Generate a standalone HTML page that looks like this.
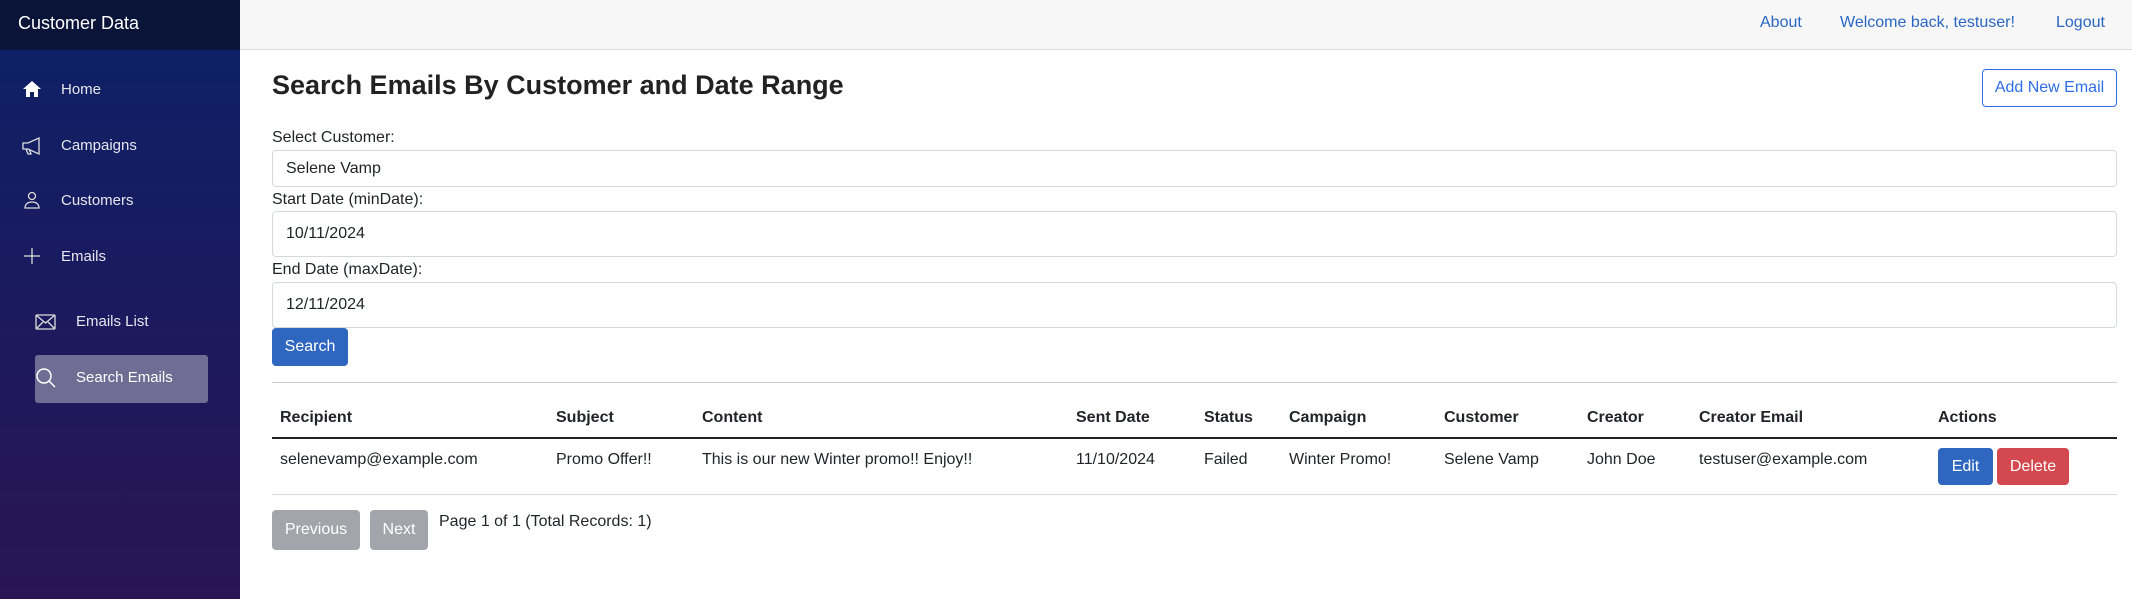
<!DOCTYPE html>
<html><head><meta charset="utf-8"><style>
*{box-sizing:border-box;margin:0;padding:0}
body{width:2132px;height:599px;overflow:hidden;font-family:"Liberation Sans",Arial,sans-serif;background:#fff;color:#212529;position:relative}
.a{position:absolute;white-space:nowrap}
#side{position:absolute;left:0;top:0;width:240px;height:599px;background:linear-gradient(180deg,#0f2066 50px,#1b1a5e 300px,#2a1555 599px)}
#sh{position:absolute;left:0;top:0;width:240px;height:50px;background:#0a1438;color:#fff;font-size:18px;line-height:46px;padding-left:18px}
.nav{color:#e6e6ee;font-size:15px}
#top{position:absolute;left:240px;top:0;right:0;height:50px;background:#f7f7f7;border-bottom:1px solid #dcdcdc}
.lnk{color:#2a66c4;font-size:16px}
.inp{position:absolute;left:272px;width:1845px;border:1px solid #d5d8dc;border-radius:4px;font-size:16px;padding-left:13px}
.lbl{font-size:16px}
.th{font-weight:bold;font-size:16px;top:409px}
.td{font-size:16px;top:451px}
.btn{position:absolute;color:#fff;font-size:16px;border-radius:4px;text-align:center}
</style></head><body>
<div id="side">
<div id="sh">Customer Data</div>
<svg class="a" style="left:22px;top:80px" width="20" height="18" viewBox="0 0 20 18"><path d="M10 1L1 9h3v8h4v-5h4v5h4V9h3z" fill="#fff"/></svg>
<div class="a nav" style="left:61px;top:81px">Home</div>
<svg class="a" style="left:21px;top:136px" width="22" height="20" viewBox="0 0 22 20" fill="none" stroke="#ddd" stroke-width="1.3"><path d="M2 7h5l11-5v16L7 13H2z M5 13l2 5h3l-2-5 M18 2v16"/></svg>
<div class="a nav" style="left:61px;top:137px">Campaigns</div>
<svg class="a" style="left:23px;top:191px" width="18" height="18" viewBox="0 0 18 18" fill="none" stroke="#ddd" stroke-width="1.3"><circle cx="9" cy="5" r="3.5"/><path d="M2 17c0-4 3-6 7-6s7 2 7 6z"/></svg>
<div class="a nav" style="left:61px;top:192px">Customers</div>
<svg class="a" style="left:23px;top:247px" width="18" height="18" viewBox="0 0 18 18" stroke="#ddd" stroke-width="1.3"><path d="M9 1v16M1 9h16"/></svg>
<div class="a nav" style="left:61px;top:248px">Emails</div>
<svg class="a" style="left:35px;top:314px" width="21" height="16" viewBox="0 0 21 16" fill="none" stroke="#ddd" stroke-width="1.3"><rect x="1" y="1" width="19" height="14" rx="1"/><path d="M1 1l9.5 8L20 1M1 15l7-7M20 15l-7-7"/></svg>
<div class="a nav" style="left:76px;top:313px">Emails List</div>
<div class="a" style="left:35px;top:355px;width:173px;height:48px;background:#706c94;border-radius:3px"></div>
<svg class="a" style="left:35px;top:367px" width="22" height="22" viewBox="0 0 22 22" fill="none" stroke="#fff" stroke-width="1.5"><circle cx="9" cy="9" r="7"/><path d="M14 14l6 6"/></svg>
<div class="a nav" style="left:76px;top:369px;color:#fff">Search Emails</div>
</div>
<div id="top"></div>
<div class="a lnk" style="left:1760px;top:14px">About</div>
<div class="a lnk" style="left:1840px;top:14px">Welcome back, testuser!</div>
<div class="a lnk" style="left:2056px;top:14px">Logout</div>
<div class="a" style="left:272px;top:70px;font-size:27px;font-weight:bold;color:#222">Search Emails By Customer and Date Range</div>
<div class="a" style="left:1982px;top:69px;width:135px;height:38px;border:1px solid #2f6ee8;border-radius:4px;color:#2f6ee8;font-size:16px;text-align:center;line-height:36px">Add New Email</div>
<div class="a lbl" style="left:272px;top:129px">Select Customer:</div>
<div class="inp" style="top:150px;height:37px;line-height:35px">Selene Vamp</div>
<div class="a lbl" style="left:272px;top:191px">Start Date (minDate):</div>
<div class="inp" style="top:211px;height:46px;line-height:44px">10/11/2024</div>
<div class="a lbl" style="left:272px;top:261px">End Date (maxDate):</div>
<div class="inp" style="top:282px;height:46px;line-height:44px">12/11/2024</div>
<div class="btn" style="left:272px;top:328px;width:76px;height:38px;line-height:38px;background:#2f67c0">Search</div>
<div class="a" style="left:272px;top:382px;width:1845px;height:1px;background:#ccc"></div>
<div class="a th" style="left:280px">Recipient</div>
<div class="a th" style="left:556px">Subject</div>
<div class="a th" style="left:702px">Content</div>
<div class="a th" style="left:1076px">Sent Date</div>
<div class="a th" style="left:1204px">Status</div>
<div class="a th" style="left:1289px">Campaign</div>
<div class="a th" style="left:1444px">Customer</div>
<div class="a th" style="left:1587px">Creator</div>
<div class="a th" style="left:1699px">Creator Email</div>
<div class="a th" style="left:1938px">Actions</div>
<div class="a" style="left:272px;top:437px;width:1845px;height:2px;background:#222"></div>
<div class="a td" style="left:280px">selenevamp@example.com</div>
<div class="a td" style="left:556px">Promo Offer!!</div>
<div class="a td" style="left:702px">This is our new Winter promo!! Enjoy!!</div>
<div class="a td" style="left:1076px">11/10/2024</div>
<div class="a td" style="left:1204px">Failed</div>
<div class="a td" style="left:1289px">Winter Promo!</div>
<div class="a td" style="left:1444px">Selene Vamp</div>
<div class="a td" style="left:1587px">John Doe</div>
<div class="a td" style="left:1699px">testuser@example.com</div>
<div class="btn" style="left:1938px;top:448px;width:55px;height:37px;line-height:37px;background:#2f67c0">Edit</div>
<div class="btn" style="left:1997px;top:448px;width:72px;height:37px;line-height:37px;background:#d4484f">Delete</div>
<div class="a" style="left:272px;top:494px;width:1845px;height:1px;background:#ddd"></div>
<div class="btn" style="left:272px;top:510px;width:88px;height:40px;line-height:40px;background:#a2a6ab">Previous</div>
<div class="btn" style="left:370px;top:510px;width:58px;height:40px;line-height:40px;background:#a2a6ab">Next</div>
<div class="a" style="left:439px;top:513px;font-size:16px">Page 1 of 1 (Total Records: 1)</div>
</body></html>
